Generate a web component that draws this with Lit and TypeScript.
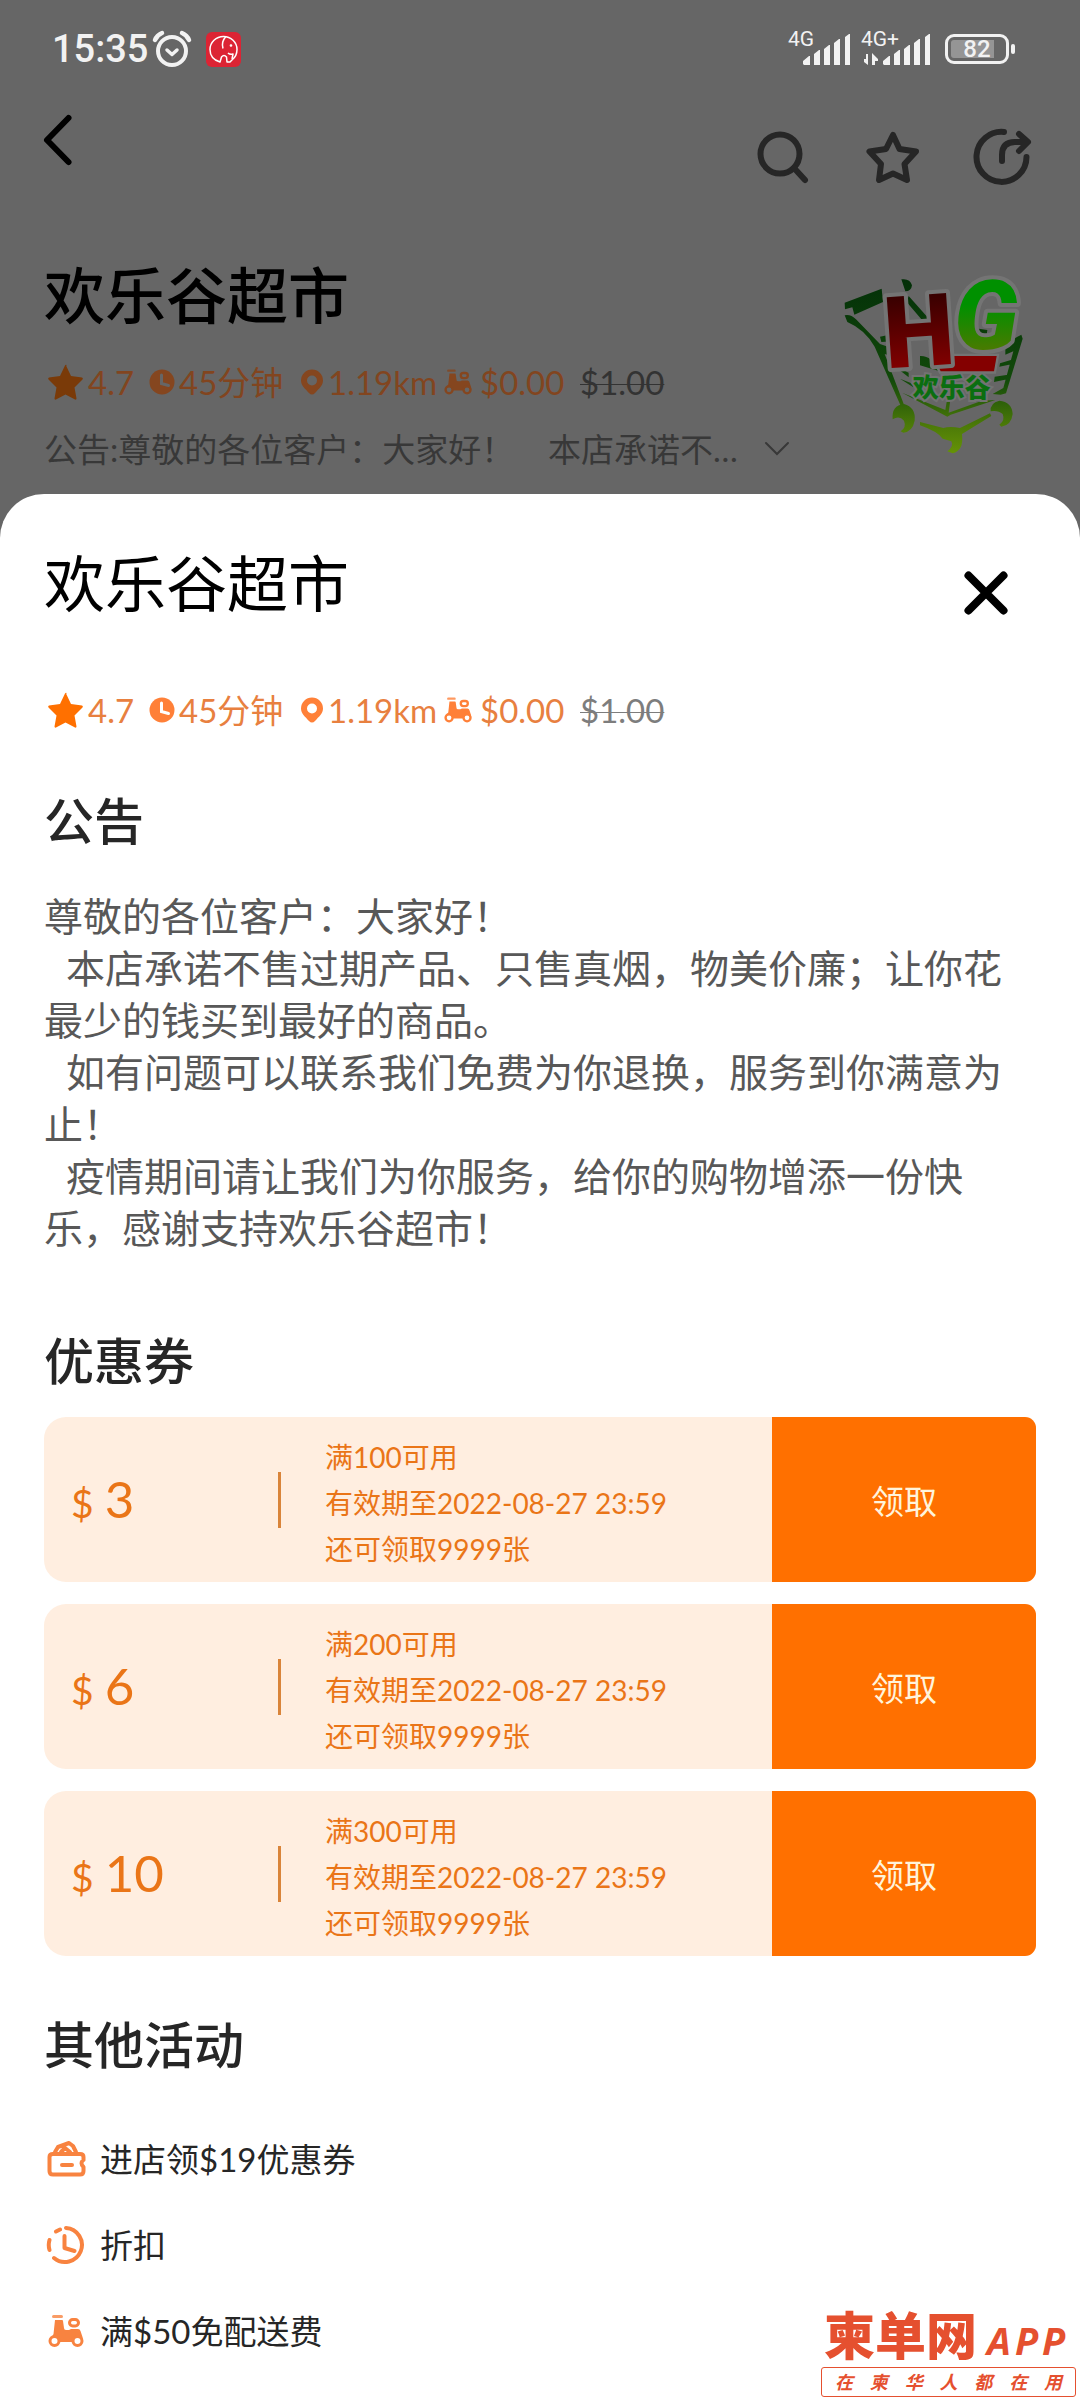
import { LitElement, html, svg, css } from "lit";
import { customElement, property } from "lit/decorators.js";

const scooterShape = svg`
  <rect x="4" y="0" width="11" height="3" rx="1.5" opacity="0.8"></rect>
  <path d="M7 5h7q1 0 1 1l1 7q0 2 2 2h3l2-1h7q2 0 2.500 2l2 6q1 3-1 5h-8h-14h-7q-2-2-.5-5l1.500-3z"></path>
  <rect x="21.500" y="4.500" width="9" height="6.500" rx="3.200" fill="none" stroke="currentColor" stroke-width="3"></rect>
  <circle class="hole" cx="6.500" cy="26" r="4.500" stroke="currentColor" stroke-width="3"></circle>
  <circle class="hole" cx="29.500" cy="26" r="4.500" stroke="currentColor" stroke-width="3"></circle>
`;

@customElement("store-facts")
export class StoreFacts extends LitElement {
  static styles = css`
    :host {
      display: block;
      color: var(--fact-text, #e8803f);
      font-size: 33px;
      line-height: 40px;
    }
    ul {
      display: grid;
      grid-template-columns: 105px 151px 144px 136px auto;
      justify-content: start;
      margin: 0;
      padding: 0;
      list-style: none;
    }
    li {
      display: flex;
      align-items: center;
      gap: 4px;
      white-space: nowrap;
    }
    svg {
      flex: none;
      fill: currentColor;
      color: var(--fact-icon, #ff8038);
    }
    .star {
      color: var(--fact-star, #ff7000);
    }
    .hole {
      fill: var(--surface, #fff);
    }
    s {
      color: var(--fact-old, #7d7d7d);
      text-decoration-thickness: 1px;
    }
  `;

  render() {
    return html`
      <ul>
        <li>
          <svg class="star" width="40" height="38" viewBox="0 0 40 38" aria-hidden="true">
            <path d="M22 2.500l5 10.500 11 1.500q1.500.5.5 2l-8 8 2 11q0 1.500-1.500 1l-9.500-5-9.500 5q-1.500.5-1.500-1l2-11-8-8q-1-1.500.5-2l11-1.500 5-10.500q1-1.500 2 0z"></path>
          </svg>
          <span>4.7</span>
        </li>
        <li>
          <svg width="26" height="26" viewBox="0 0 26 26" aria-hidden="true">
            <circle cx="13" cy="13" r="12.500"></circle>
            <path d="M12.500 6v8.500l7 2" fill="none" stroke="var(--surface, #fff)" stroke-width="3" stroke-linecap="round"></path>
          </svg>
          <span>45分钟</span>
        </li>
        <li>
          <svg width="24" height="26" viewBox="0 0 24 26" aria-hidden="true">
            <path fill-rule="evenodd" d="M12 .5a11 11 0 0 1 11 11c0 5-4 8-8 12.500q-3 3-6 0c-4-4.500-8-7.500-8-12.500a11 11 0 0 1 11-11zM12 6.500a5 5 0 1 0 0 10a5 5 0 1 0 0-10z"></path>
          </svg>
          <span>1.19km</span>
        </li>
        <li>
          <svg width="32" height="26" viewBox="0 0 41 32" aria-hidden="true">${scooterShape}</svg>
          <span>$0.00</span>
        </li>
        <li><s>$1.00</s></li>
      </ul>
    `;
  }
}

@customElement("coupon-card")
export class CouponCard extends LitElement {
  @property({ type: Number }) amount = 0;
  @property({ type: Number }) threshold = 0;
  @property() expires = "";
  @property({ type: Number }) remaining = 0;

  static styles = css`
    :host {
      display: block;
      color: #ea7517;
    }
    .card {
      display: grid;
      grid-template-columns: 234px 3px 1fr 264px;
      align-items: center;
      min-height: 165px;
      border-radius: 22px 11px 11px 22px;
      overflow: hidden;
      background: #ffeee0;
    }
    .amount {
      display: flex;
      align-items: baseline;
      gap: 11px;
      padding: 2px 0 0 27px;
      font-size: 51px;
      line-height: 60px;
    }
    .currency {
      font-size: 39px;
    }
    .divider {
      height: 56px;
      background: #d9843a;
    }
    .terms {
      margin: 0;
      padding: 6px 0 0 44px;
      font-size: 28px;
      line-height: 46px;
    }
    button {
      align-self: stretch;
      margin: 0;
      padding: 0;
      border: 0;
      background: #ff7000;
      color: #fff4dc;
      font: inherit;
      font-size: 33px;
    }
  `;

  render() {
    return html`
      <article class="card">
        <div class="amount"><span class="currency">$</span><span>${this.amount}</span></div>
        <div class="divider"></div>
        <p class="terms">
          满${this.threshold}可用<br />有效期至${this.expires}<br />还可领取${this.remaining}张
        </p>
        <button type="button">领取</button>
      </article>
    `;
  }
}

const signalBars = (x: number) => svg`
  <path fill="#f2f2f2" d="M${x} 34v-3l6-5h1v9h-6zM${x + 11} 35v-11l5-4h1v15zM${x + 21} 35v-16l5-4h1v20zM${x + 31} 35v-22l5-4h1v26zM${x + 42} 35v-28l4-3h1v31z"></path>
`;

@customElement("app-root")
export class AppRoot extends LitElement {
  static styles = css`
    :host {
      display: flex;
      flex-direction: column;
      position: relative;
      min-height: 100vh;
      background: #666;
      color: #262626;
      font-family: Lato, "Noto Sans CJK SC", sans-serif;
      text-spacing-trim: space-all;
    }
    h1,
    h2,
    p,
    ul {
      margin: 0;
      padding: 0;
      font-weight: 400;
    }
    button {
      display: flex;
      align-items: center;
      justify-content: center;
      padding: 0;
      border: 0;
      background: none;
      color: inherit;
      font: inherit;
    }
    svg {
      flex: none;
    }

    .status {
      display: flex;
      align-items: center;
      justify-content: space-between;
      height: 98px;
      padding: 0 65px 0 52px;
      color: #f2f2f2;
    }
    .status-side {
      display: flex;
      align-items: center;
    }
    .clock {
      font-family: Roboto, sans-serif;
      font-size: 38px;
      font-weight: 500;
      line-height: 48px;
    }
    .alarm {
      margin: 0 14px 0 4px;
    }
    .net {
      margin-right: 8px;
      font-family: Roboto, sans-serif;
      font-size: 21px;
      fill: #f2f2f2;
    }
    .battery {
      display: flex;
      align-items: center;
      gap: 2px;
      margin-left: 5px;
    }
    .cell {
      box-sizing: border-box;
      width: 64px;
      height: 30px;
      padding: 3px;
      border: 3px solid #f2f2f2;
      border-radius: 9px;
      font-family: Roboto, sans-serif;
      font-size: 24px;
      font-weight: 500;
      line-height: 18px;
      text-align: center;
    }
    .charge {
      border-radius: 3px;
      background: linear-gradient(to right, #959595 82%, #666 82%);
    }
    .nub {
      width: 4px;
      height: 10px;
      border-radius: 2px;
      background: #f2f2f2;
    }

    .toolbar {
      display: flex;
      align-items: center;
      justify-content: space-between;
      height: 118px;
      padding: 0 48px 0 40px;
    }
    .back {
      align-self: flex-start;
      height: 84px;
    }
    .actions {
      display: flex;
      gap: 50px;
    }
    .stroke {
      fill: none;
      stroke: #262626;
      stroke-width: 6;
      stroke-linecap: round;
      stroke-linejoin: round;
    }

    .store {
      --surface: #666;
      --fact-text: #82451f;
      --fact-icon: #85461f;
      --fact-star: #7a3a08;
      --fact-old: #333;
      display: flex;
      justify-content: space-between;
      padding: 40px 44px 21px;
    }
    .store-text {
      flex: 1;
      min-width: 0;
    }
    .name {
      color: #000;
      font-size: 61px;
      line-height: 80px;
    }
    .store .name {
      font-weight: 500;
      margin-bottom: 26px;
    }
    .notice {
      justify-content: flex-start;
      gap: 26px;
      margin-top: 23px;
      color: #383838;
      font-size: 33px;
      line-height: 48px;
      white-space: pre;
    }

    .sheet {
      flex: 1;
      padding: 50px 44px 24px;
      border-radius: 44px 44px 0 0;
      background: #fff;
    }
    .sheet-head {
      display: flex;
      justify-content: space-between;
      margin-bottom: 66px;
    }
    .close {
      align-self: flex-end;
      width: 60px;
      height: 62px;
      margin-right: 20px;
    }
    .facts {
      margin-bottom: 61px;
    }
    .section {
      margin-top: 59px;
      font-size: 50px;
      font-weight: 500;
      line-height: 60px;
    }
    .announcement {
      margin: 39px 0 77px;
      color: #585858;
      font-size: 39px;
      line-height: 52px;
    }
    .indented {
      text-indent: 22px;
    }
    .coupons {
      display: grid;
      gap: 22px;
      margin-top: 26px;
    }
    .offers {
      margin-top: 41px;
      list-style: none;
      font-size: 33px;
      line-height: 86px;
    }
    .offers li {
      display: flex;
      align-items: center;
      gap: 14px;
    }
    .offers svg {
      color: #f88340;
      fill: currentColor;
    }
    .offers .line {
      fill: none;
      stroke: currentColor;
      stroke-width: 4;
      stroke-linecap: round;
      stroke-linejoin: round;
    }
    .offers .hole {
      fill: #fff;
    }

    .brand {
      position: absolute;
      right: 4px;
      bottom: 3px;
      width: 255px;
      color: #e5502f;
    }
    .brand-name {
      display: flex;
      align-items: baseline;
      gap: 10px;
      padding-left: 3px;
      font-size: 51px;
      font-weight: 900;
      line-height: 54px;
    }
    .brand-app {
      display: flex;
      gap: 4px;
      font-family: "Open Sans", sans-serif;
      font-size: 38px;
      font-weight: 700;
      font-style: italic;
    }
    .brand-tag {
      display: flex;
      justify-content: space-between;
      padding: 0 13px;
      border: 1px solid #e5502f;
      border-radius: 3px;
      font-size: 18px;
      font-weight: 700;
      font-style: italic;
      line-height: 28px;
    }
  `;

  private coupons = [
    { amount: 3, threshold: 100 },
    { amount: 6, threshold: 200 },
    { amount: 10, threshold: 300 },
  ];

  private renderStatus() {
    return html`
      <div class="status">
        <div class="status-side">
          <span class="clock">15:35</span>
          <svg class="alarm" width="40" height="38" viewBox="0 0 40 38" fill="none" stroke="#f2f2f2" stroke-linecap="round" aria-hidden="true">
            <circle cx="20" cy="21" r="14" stroke-width="4"></circle>
            <path d="M15 20l5 4.500 5-4.500" stroke-width="3.500" stroke-linejoin="round"></path>
            <path d="M3 10q2-5 7-7M37 10q-2-5-7-7" stroke-width="4.500"></path>
          </svg>
          <svg width="35" height="35" viewBox="0 0 35 35" fill="none" stroke="#fff" stroke-width="1.500" stroke-linejoin="round" aria-hidden="true">
            <rect width="35" height="35" rx="6" fill="#dc2434" stroke="none"></rect>
            <path d="M14 30Q4 27 4 17.500A13.500 13 0 0 1 31 17.500Q31 24 26 28l-2 2h-3l-.5-5q-2.500-3-5 0z"></path>
            <path d="M20 4.500q-5 5-3 12M22 21q2 2 5 1l-1 5"></path>
            <circle cx="25" cy="13.500" r=".6"></circle>
          </svg>
        </div>
        <div class="status-side">
          <svg class="net" width="65" height="54" viewBox="0 -8 65 54">
            <text x="1" y="16">4G</text>
            ${signalBars(16)}
          </svg>
          <svg class="net" width="72" height="54" viewBox="0 -8 72 54">
            <text x="1" y="16">4G+</text>
            <path d="M8 24v11l-4-3v-3h2v-5zM12 35v-12l6 6v2h-3v4z"></path>
            ${signalBars(23)}
          </svg>
          <div class="battery">
            <div class="cell"><div class="charge">82</div></div>
            <div class="nub"></div>
          </div>
        </div>
      </div>
    `;
  }

  private renderToolbar() {
    return html`
      <nav class="toolbar" aria-label="店铺">
        <button class="back" type="button" aria-label="返回">
          <svg width="34" height="54" viewBox="0 0 34 54" fill="none" stroke="#000" stroke-width="6" stroke-linecap="round" stroke-linejoin="round">
            <path d="M28.500 5L7 27l21.500 22"></path>
          </svg>
        </button>
        <div class="actions">
          <button type="button" aria-label="搜索">
            <svg class="stroke" width="60" height="60" viewBox="0 0 60 60">
              <circle cx="28" cy="27" r="19.500"></circle><path d="M42 41l11 12"></path>
            </svg>
          </button>
          <button type="button" aria-label="收藏">
            <svg class="stroke" width="60" height="60" viewBox="0 0 60 60">
              <path d="M31 8l6.500 14L54 24.500 42.500 37 45 53 31 46.500 17 53l2-16L7.500 24.500 24 22z"></path>
            </svg>
          </button>
          <button type="button" aria-label="分享">
            <svg class="stroke" width="60" height="60" viewBox="0 0 60 60">
              <path d="M32 5A25 25 0 1 0 54.500 30"></path>
              <path d="M30 34v-6q0-13 13-13h12M47 7l9 8-9 9"></path>
            </svg>
          </button>
        </div>
      </nav>
    `;
  }

  private renderLogo() {
    return html`
      <svg width="192" height="198" viewBox="432 50 576 594" role="img" aria-label="HG 欢乐谷">
        <defs>
          <linearGradient id="cart" x1="0" y1="100" x2="0" y2="640" gradientUnits="userSpaceOnUse">
            <stop offset="0" stop-color="#022e08"></stop>
            <stop offset=".6" stop-color="#124a0a"></stop>
            <stop offset=".85" stop-color="#4c7a08"></stop>
            <stop offset="1" stop-color="#659206"></stop>
          </linearGradient>
          <linearGradient id="red" x1="0" y1="0" x2="0" y2="1">
            <stop offset=".2" stop-color="#3a0000"></stop>
            <stop offset=".9" stop-color="#8c0000"></stop>
          </linearGradient>
          <linearGradient id="green" x1="0" y1="0" x2="0" y2="1">
            <stop offset=".4" stop-color="#009000"></stop>
            <stop offset=".8" stop-color="#4a7a00"></stop>
          </linearGradient>
        </defs>
        <g fill="url(#cart)">
          <path d="M434 190L545 148l4 40-86 38-6-22-22 6z"></path>
          <path d="M434 228q18-4 34 12l72 74q40 14 58 20v24q-24-8-44-14l58 152-8 8-80-182q-30-52-82-74z"></path>
          <path d="M604 120q26-4 32 18-2 18-20 18zM626 170l62 70-22 2-46-54zM540 292l38-8v22l-34 2zM806 264l56 8-2 14-52-6zM660 350q36-2 54 44l-54-16z"></path>
          <path d="M580 378l46 22v14zM600 418l40 16v10zM916 312l48-26 4 12-50 164-16 4-24-2 32-18 30-110-24 10zM900 372l40-12-2 14-40 8zM884 412l40-6-2 14-40 8z"></path>
          <path d="M606 460l130 52 4-24h10l-4 32 100-36 40-2-134 44-10 6zM660 548l70 18q20-6 50 0l90-44 4 8-88 54q6 50-28 58l-16-6q20-14 12-30l-26-8q-16-22-68-40z"></path>
          <path d="M578 540q-4-42 34-46 36 10 32 50-6 32-34 36l-8-4q18-12 10-32-14-16-34-4zM872 516q-2-26 26-32 38 4 40 40-4 34-34 38l-6-6q18-12 10-32-14-12-36-8z"></path>
        </g>
        <path d="M700 350h190l-8 46H722z" fill="#840000" stroke="#747474" stroke-width="14" paint-order="stroke"></path>
        <g font-weight="900" stroke="#747474" stroke-width="24" stroke-linejoin="round" paint-order="stroke">
          <text x="550" y="380" font-family="Roboto, sans-serif" font-size="300" fill="url(#red)" transform="rotate(-4 660 260)">H</text>
          <text x="762" y="330" font-family="Roboto, sans-serif" font-size="290" font-style="italic" fill="url(#green)">G</text>
        </g>
        <text x="638" y="474" font-family="Noto Sans CJK SC, sans-serif" font-weight="900" font-size="78" fill="#0b6e10" stroke="#737373" stroke-width="12" paint-order="stroke">欢乐谷</text>
      </svg>
    `;
  }

  render() {
    return html`
      <header>
        ${this.renderStatus()} ${this.renderToolbar()}
        <section class="store">
          <div class="store-text">
            <h1 class="name">欢乐谷超市</h1>
            <store-facts></store-facts>
            <button class="notice" type="button"><span>公告:尊敬的各位客户：大家好！&nbsp;&nbsp;&nbsp;&nbsp;本店承诺不…</span><svg width="26" height="18" viewBox="0 0 26 18" fill="none" stroke="#383838" stroke-width="2" stroke-linecap="round" aria-hidden="true"><path d="M2 3l11 11L24 3"></path></svg></button>
          </div>
          ${this.renderLogo()}
        </section>
      </header>

      <main class="sheet">
        <div class="sheet-head">
          <h1 class="name">欢乐谷超市</h1>
          <button class="close" type="button" aria-label="关闭">
            <svg width="46" height="46" viewBox="0 0 46 46" fill="none" stroke="#000" stroke-width="8" stroke-linecap="round">
              <path d="M5.500 5.500l35 35M40.500 5.500l-35 35"></path>
            </svg>
          </button>
        </div>
        <store-facts class="facts"></store-facts>

        <h2 class="section">公告</h2>
        <div class="announcement">
          <p>尊敬的各位客户：大家好！</p>
          <p class="indented">本店承诺不售过期产品、只售真烟，物美价廉；让你花最少的钱买到最好的商品。</p>
          <p class="indented">如有问题可以联系我们免费为你退换，服务到你满意为止！</p>
          <p class="indented">疫情期间请让我们为你服务，给你的购物增添一份快乐，感谢支持欢乐谷超市！</p>
        </div>

        <h2 class="section">优惠券</h2>
        <div class="coupons">
          ${this.coupons.map(
            (c) => html`<coupon-card
              .amount=${c.amount}
              .threshold=${c.threshold}
              .expires=${"2022-08-27 23:59"}
              .remaining=${9999}
            ></coupon-card>`
          )}
        </div>

        <h2 class="section">其他活动</h2>
        <ul class="offers">
          <li>
            <svg width="42" height="38" viewBox="0 0 42 38" aria-hidden="true">
              <path class="line" d="M8 14h28q3.500 0 3.500 3v3q-4 3 0 7v4q0 3.500-3.500 3.500H9q-3.500 0-3.500-3.500V17q0-3 3.500-3z"></path>
              <path class="line" d="M11 12l3-5 11-4 4 3 3 6M17 12l4-4 5 4"></path>
              <path class="line" d="M18 25h10"></path>
            </svg>
            进店领$19优惠券
          </li>
          <li>
            <svg width="42" height="42" viewBox="0 0 42 42" aria-hidden="true">
              <path class="line" d="M22 4A17 17 0 1 1 10 34M5.500 26q-1.500-5 0-10M12 7.500l4-2M20.500 12v12l10 3"></path>
            </svg>
            折扣
          </li>
          <li>
            <svg width="42" height="34" viewBox="-4 -1 42 34" aria-hidden="true">${scooterShape}</svg>
            满$50免配送费
          </li>
        </ul>
      </main>

      <aside class="brand">
        <div class="brand-name">
          <span>柬单网</span>
          <span class="brand-app"><span>A</span><span>P</span><span>P</span></span>
        </div>
        <div class="brand-tag">${[..."在柬华人都在用"].map((ch) => html`<span>${ch}</span>`)}</div>
      </aside>
    `;
  }
}
